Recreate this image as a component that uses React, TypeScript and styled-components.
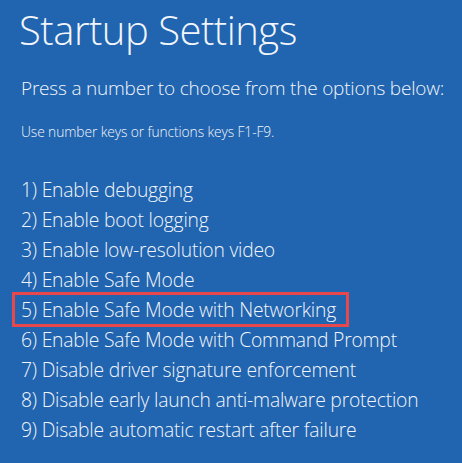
import type { FC } from 'react'
import styled, { createGlobalStyle } from 'styled-components'

const GlobalStyle = createGlobalStyle`
  html, body {
    margin: 0;
    padding: 0;
    background: #2164af;
  }
`

const options = [
  'Enable debugging',
  'Enable boot logging',
  'Enable low-resolution video',
  'Enable Safe Mode',
  'Enable Safe Mode with Networking',
  'Enable Safe Mode with Command Prompt',
  'Disable driver signature enforcement',
  'Disable early launch anti-malware protection',
  'Disable automatic restart after failure'
]

const App: FC = () => {
  const selected = 5

  return (
    <>
      <GlobalStyle />
      <Screen>
        <Title>Startup Settings</Title>
        <Prompt>Press a number to choose from the options below:</Prompt>
        <Hint>Use number keys or functions keys F1-F9.</Hint>
        <OptionList>
          {options.map((text, i) => (
            <Option key={text} highlighted={i + 1 === selected}>
              {i + 1}) {text}
            </Option>
          ))}
        </OptionList>
      </Screen>
    </>
  )
}

const Screen = styled.div`
  width: 462px;
  height: 463px;
  box-sizing: border-box;
  padding: 4px 0 0 21px;
  background: #2164af;
  color: #f2f6fb;
  font-family: 'Open Sans', 'Noto Sans', sans-serif;
  font-weight: 300;
  display: flex;
  flex-direction: column;
  overflow: hidden;
`

const Title = styled.h1`
  margin: 0 0 0 -2px;
  font-size: 40px;
  font-weight: 300;
  line-height: 52px;
  letter-spacing: -0.5px;
`

const Prompt = styled.div`
  margin-top: 19px;
  font-size: 19px;
  line-height: 26px;
  letter-spacing: -0.2px;
`

const Hint = styled.div`
  margin-top: 21px;
  font-size: 13.8px;
  line-height: 20px;
  letter-spacing: -0.1px;
`

const OptionList = styled.div`
  margin-top: 33px;
  display: flex;
  flex-direction: column;
  align-items: flex-start;
`

const Option = styled.div<{ highlighted?: boolean }>`
  font-size: 19.3px;
  line-height: 30px;
  letter-spacing: -0.2px;
  white-space: nowrap;

  ${(p) =>
    p.highlighted &&
    `
    margin: -3px 0 -2px -9px;
    padding: 0 10px 0 6px;
    border: 3px solid #e8474b;
    line-height: 29px;
  `}
`

export default App
